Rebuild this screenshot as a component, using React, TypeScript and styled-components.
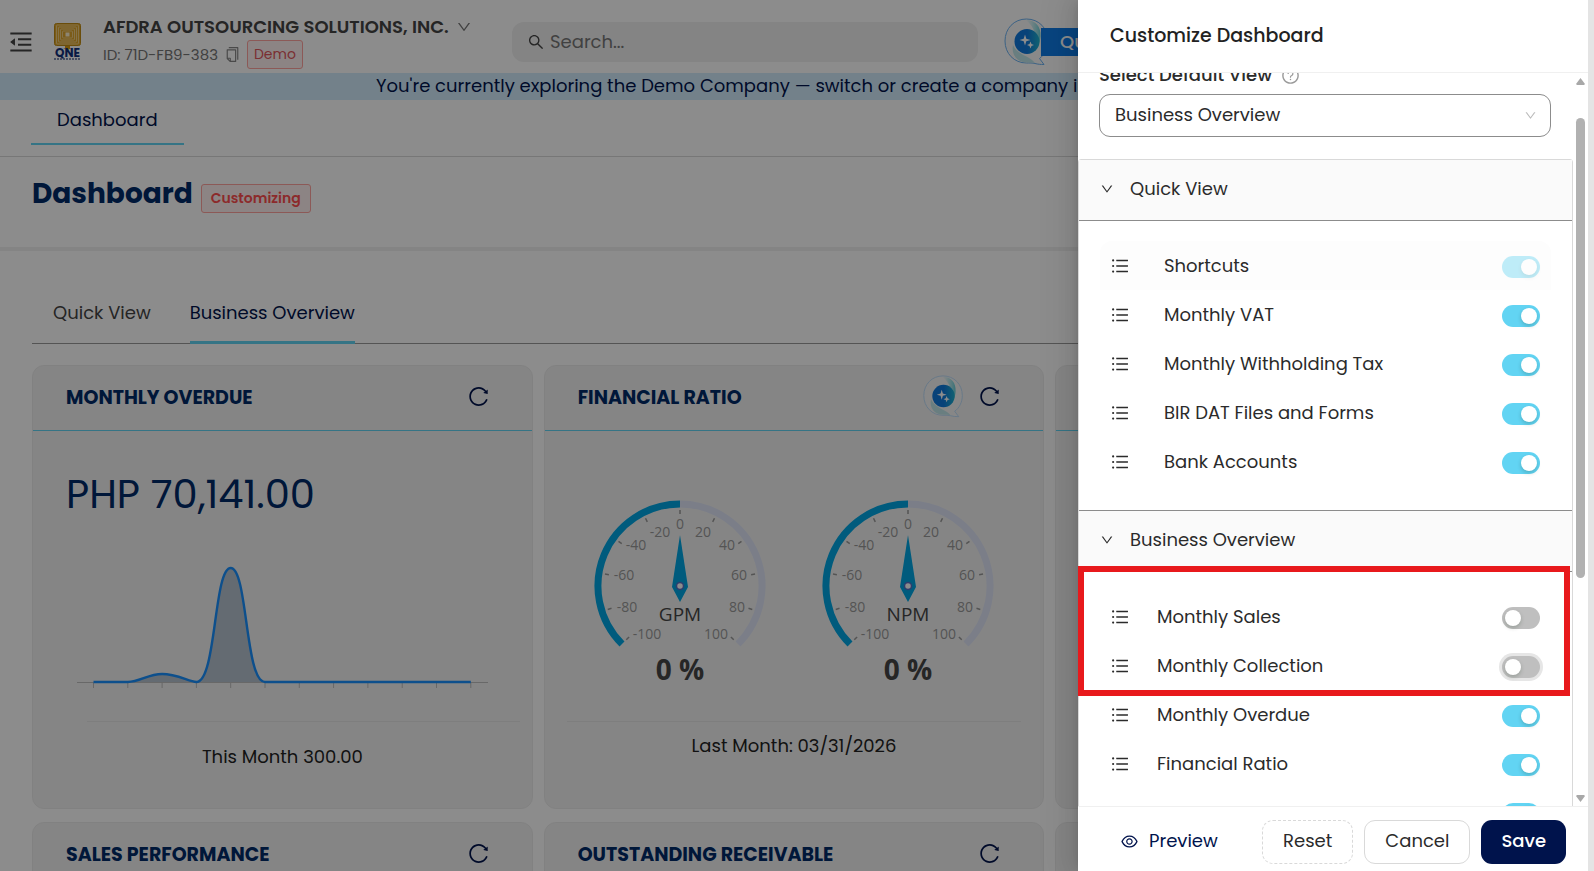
import React, { useId, useLayoutEffect, useRef, useState } from 'react';
import styled, { createGlobalStyle, css } from 'styled-components';
import {
  AiOutlineCopy,
  AiOutlineDown,
  AiOutlineEye,
  AiOutlineMenuFold,
  AiOutlineQuestionCircle,
  AiOutlineReload,
  AiOutlineSearch,
  AiOutlineUnorderedList,
} from 'react-icons/ai';

const sans = `Poppins, Inter, "Open Sans", sans-serif`;
const chartSans = `"Segoe UI", "Open Sans", sans-serif`;
const navy = '#00134c';
const heading = '#002a69';
const sky = '#62d4f3';

const GlobalStyle = createGlobalStyle`
  *, *::before, *::after { box-sizing: border-box; }
  body { margin: 0; background: #fff; font: 400 18px/28px ${sans}; color: #2b2b2b; overflow: hidden; }
  button, input, select { font: inherit; color: inherit; }
  button { border: 0; padding: 0; background: none; cursor: pointer; }
  h1, h2, p { margin: 0; }
  svg { display: block; flex: none; }
`;

/* ---------- shell ---------- */

const Frame = styled.div`
  display: flex;
  height: 100vh;
`;
const Shell = styled.div`
  position: relative;
  flex: 1;
  min-width: 0;
  overflow: hidden;
`;
const WindowGutter = styled.div`
  flex: none;
  width: 6px;
  background: #e4e4e4;
`;
const Mask = styled.div`
  position: absolute;
  inset: 0;
  background: rgba(0, 0, 0, 0.45);
`;

/* ---------- top bar ---------- */

const TopBar = styled.header`
  display: flex;
  align-items: center;
  height: 73px;
  padding: 14px 0 4px 10px;
`;
const Brand = styled.div`
  display: flex;
  align-items: center;
  gap: 22px;
  flex: 0 0 502px;
`;
const IconButton = styled.button<{ $color?: string }>`
  display: flex;
  align-items: center;
  color: ${(p) => p.$color ?? '#444'};
`;
const CompanyName = styled.button`
  display: flex;
  align-items: center;
  gap: 7px;
  font-weight: 600;
  line-height: 26px;
  color: #444;
  white-space: nowrap;
`;
const CompanyMeta = styled.div`
  display: flex;
  align-items: center;
  gap: 6px;
  font-size: 15px;
  color: #777;
`;
const Tag = styled.span<{ $strong?: boolean }>`
  border: 1px solid #ffa39e;
  border-radius: 3px;
  background: #fff1f0;
  font-size: 14px;
  line-height: 27px;
  ${(p) =>
    p.$strong
      ? css`padding: 0 9px; font-weight: 600; color: #ff4d4f;`
      : css`padding: 0 6px; color: #e0565c;`}
`;
const SearchBox = styled.label`
  display: flex;
  align-items: center;
  gap: 3px;
  flex: 0 1 466px;
  height: 40px;
  padding: 0 15px;
  border-radius: 12px;
  background: #f0f0f0;
  color: #444;
`;
const SearchInput = styled.input`
  flex: 1;
  min-width: 0;
  border: 0;
  background: none;
  outline: none;
  &::placeholder { color: #777; opacity: 1; }
`;
const Assistant = styled.button`
  display: flex;
  align-items: center;
  margin-left: 25px;
  color: #fff;
`;
const AssistantLabel = styled.span`
  height: 28px;
  margin-left: -10px;
  padding: 0 16px 0 19px;
  border-radius: 0 6px 6px 0;
  background: #0f7ce8;
  font-weight: 500;
  white-space: nowrap;
`;
const Notice = styled.p`
  height: 27px;
  line-height: 26px;
  padding-left: 376px;
  background: #d1ecfc;
  color: ${navy};
  white-space: nowrap;
  overflow: hidden;
`;

/* ---------- page ---------- */

const PageTabs = styled.nav`
  display: flex;
  align-items: flex-start;
  height: 57px;
  padding-left: 31px;
  border-bottom: 1px solid #d9d9d9;
`;
const PageTab = styled.button`
  height: 45px;
  padding: 0 26px 4px;
  border-bottom: 2px solid ${sky};
  color: ${navy};
`;
const TitleRow = styled.div`
  display: flex;
  align-items: baseline;
  gap: 8px;
  height: 94px;
  padding: 13px 0 0 32px;
  border-bottom: 4px solid #f0f0f0;
`;
const PageTitle = styled.h1`
  font-size: 28px;
  font-weight: 700;
  line-height: 48px;
  color: ${heading};
`;
const Content = styled.main`
  padding: 47px 32px 0;
`;
const ViewTabs = styled.nav`
  display: flex;
  gap: 39px;
  padding: 0 21px;
  border-bottom: 1px solid #999;
`;
const ViewTab = styled.button<{ $active?: boolean }>`
  margin-bottom: -1px;
  padding-bottom: 13px;
  line-height: 30px;
  border-bottom: 3px solid ${(p) => (p.$active ? sky : 'transparent')};
  color: ${(p) => (p.$active ? navy : '#444')};
`;
const CardGrid = styled.div`
  display: grid;
  grid-template-columns: repeat(3, 1fr);
  gap: 13px 11px;
  margin-top: 21px;
`;
const CardBox = styled.section`
  min-height: 444px;
  border: 1px solid #ececec;
  border-radius: 12px;
  background: #f3f3f3;
`;
const CardHead = styled.header`
  display: flex;
  align-items: center;
  height: 65px;
  padding: 0 42px 0 33px;
  border-bottom: 1px solid ${sky};
`;
const CardTitle = styled.h2`
  flex: 1;
  font-size: 19px;
  font-weight: 700;
  color: ${heading};
`;
const CardTools = styled.div`
  display: flex;
  align-items: center;
  gap: 13px;
  padding-bottom: 4px;
`;
const Amount = styled.p`
  padding: 33px 0 36px 33px;
  font-size: 40px;
  line-height: 60px;
  color: ${heading};
`;
const Centered = styled.div<{ $top?: number }>`
  display: flex;
  justify-content: center;
  padding-top: ${(p) => p.$top ?? 0}px;
`;
const CardFoot = styled.p<{ $loose?: boolean }>`
  margin: ${(p) => (p.$loose ? '29px 12px 0 54px' : '26px 22px 0')};
  border-top: 1px solid #e6e6e6;
`;
const CardNote = styled.p<{ $loose?: boolean }>`
  padding-top: ${(p) => (p.$loose ? 21 : 10)}px;
  text-align: center;
  color: #222;
`;

/* ---------- drawer ---------- */

const DrawerPanel = styled.aside`
  position: absolute;
  top: 0;
  right: 0;
  bottom: 0;
  display: flex;
  flex-direction: column;
  width: 510px;
  background: #fff;
  box-shadow: -6px 0 16px rgba(0, 0, 0, 0.08), -3px 0 6px -4px rgba(0, 0, 0, 0.12), -9px 0 28px 8px rgba(0, 0, 0, 0.05);
`;
const DrawerHead = styled.header`
  flex: none;
  height: 73px;
  padding: 0 32px;
  border-bottom: 1px solid #f0f0f0;
`;
const DrawerTitle = styled.h2`
  font-size: 19px;
  font-weight: 500;
  line-height: 72px;
  color: #222;
`;
const DrawerBody = styled.div`
  display: flex;
  flex: 1;
  min-height: 0;
`;
const Scroller = styled.div`
  flex: 1;
  min-width: 0;
  overflow: hidden;
`;
const ScrollRail = styled.div`
  display: flex;
  flex-direction: column;
  justify-content: space-between;
  align-items: center;
  width: 15px;
  padding: 5px 0 4px;
`;
const RailTrack = styled.div`
  flex: 1;
  padding-top: 33px;
`;
const RailThumb = styled.div`
  width: 9px;
  height: 68%;
  border-radius: 5px;
  background: #b1b1b1;
`;
const FieldLabel = styled.div`
  display: flex;
  align-items: center;
  gap: 9px;
  padding: 24px 21px 7px;
  line-height: 24px;
  font-weight: 500;
`;
const HelpIcon = styled(AiOutlineQuestionCircle)`
  color: #999;
`;
const SelectWrap = styled.div`
  position: relative;
  margin: 0 22px 22px 21px;
`;
const SelectBox = styled.select`
  display: block;
  width: 100%;
  height: 43px;
  padding: 0 40px 2px 15px;
  border: 1px solid #8c8c8c;
  border-radius: 11px;
  background: #fff;
  appearance: none;
`;
const SelectArrow = styled(AiOutlineDown)`
  position: absolute;
  top: 15px;
  right: 14px;
  color: #bbb;
  pointer-events: none;
`;
const Collapse = styled.div`
  border: 1px solid #d9d9d9;
  border-radius: 3px;
`;
const Group = styled.section`
  & + & { border-top: 1px solid #8c8c8c; }
`;
const GroupHead = styled.button`
  display: flex;
  align-items: center;
  gap: 16px;
  width: 100%;
  height: 61px;
  padding: 0 21px 2px;
  border-bottom: 1px solid #8c8c8c;
  background: #fafafa;
  text-align: left;
`;
const GroupBody = styled.div`
  padding: 20px 21px 24px;
`;
const Row = styled.div<{ $muted?: boolean; $gap: number }>`
  display: flex;
  align-items: center;
  gap: ${(p) => p.$gap}px;
  height: 49px;
  padding: 0 11px 0 10px;
  border-radius: 12px 12px 0 0;
  background: ${(p) => (p.$muted ? '#fdfdfd' : 'transparent')};
`;
const RowLabel = styled.label`
  flex: 1;
`;
const Toggle = styled.input<{ $halo?: boolean }>`
  appearance: none;
  flex: none;
  width: 38px;
  height: 22px;
  margin: 2px 0 0;
  padding: 3px;
  border-radius: 11px;
  background: #bfbfbf;
  box-shadow: ${(p) => (p.$halo ? '0 0 0 3px #e6e6e6' : 'none')};
  &::before {
    content: '';
    display: block;
    width: 16px;
    height: 16px;
    border-radius: 50%;
    background: #fff;
    box-shadow: 0 2px 4px rgba(0, 35, 11, 0.2);
  }
  &:checked { background: ${sky}; }
  &:checked::before { margin-left: 16px; }
  &:disabled { opacity: 0.4; }
`;
const Marked = styled.div`
  position: relative;
`;
const MarkBox = styled.div`
  position: absolute;
  inset: -26px -19px -6px -22px;
  border: 6px solid #e8191c;
  pointer-events: none;
`;
const DrawerFoot = styled.footer`
  display: flex;
  align-items: center;
  gap: 11px;
  flex: none;
  padding: 13px 22px 7px 42px;
  border-top: 1px solid #f0f0f0;
`;
const FootButton = styled.button<{ $kind: 'link' | 'dashed' | 'plain' | 'primary' }>`
  display: flex;
  align-items: center;
  height: 44px;
  padding: 0 20px 2px;
  border-radius: 11px;
  ${(p) =>
    p.$kind === 'link'
      ? css`gap: 10px; margin-right: auto; padding: 0 0 2px; color: ${navy};`
      : p.$kind === 'primary'
        ? css`background: ${navy}; color: #fff; font-weight: 500;`
        : css`border: 1px ${p.$kind === 'dashed' ? 'dashed' : 'solid'} #d9d9d9; background: #fff;`}
`;

/* ---------- drawings ---------- */

const Logo = () => (
  <svg width="27" height="37" viewBox="0 0 27 37" role="img" aria-label="QNE Software">
    <rect x="0.5" y="0.5" width="26" height="22" rx="2" fill="#e0a62c" stroke="#c28c14" />
    {[2.5, 4.5, 6.5, 8.5].map((d) => (
      <rect key={d} x={d} y={d - 0.5} width={27 - 2 * d} height={24 - 2 * d} rx="1" fill="none" stroke="#f7e3ae" strokeWidth="0.7" />
    ))}
    <rect x="11.5" y="9.5" width="4" height="4" fill="#fff3d2" />
    <path d="M11 23h5v2h2l-4.5 2L9 25h2z" fill="#d89a10" />
    <text x="13.5" y="34" textAnchor="middle" fontFamily={sans} fontSize="12" fontWeight="700" fill="#12307c">QNE</text>
    <path d="M0 36h27" stroke="#5b6c9a" strokeWidth="1.5" strokeDasharray="2 1" />
  </svg>
);

const Spark = ({ size, faint }: { size: number; faint?: boolean }) => {
  const id = useId();
  return (
    <svg width={size} height={size} viewBox="0 0 46 48">
      <defs>
        <linearGradient id={id + 'a'} x1="0" y1="0" x2="1" y2="0">
          <stop offset="0.5" stopColor="#0f78dc" />
          <stop offset="1" stopColor="#1fb2cf" />
        </linearGradient>
        <linearGradient id={id + 'b'} x1="0" y1="0" x2="1" y2="0">
          <stop offset="0" stopColor="#cdeef2" stopOpacity="0.2" />
          <stop offset="1" stopColor="#63cfd8" />
        </linearGradient>
      </defs>
      <path
        d="M22.5 1C10 1 1 10.500 1 23s9 22 21.500 22c3 0 6-.2 8.500.5 3 .8 5.500 1 9 1l-4.500-6C41 36.500 44 30 44 23 44 10.500 35 1 22.500 1z"
        fill={faint ? '#f6f6f6' : '#fafafa'}
        stroke={faint ? '#b7d9f7' : '#6cb2f2'}
      />
      <path d="M22 2c10 0 15 7 14.500 16-.3 6-2 9-4 12 1-12-3-22-10.500-28z" fill={`url(#${id}b)`} />
      <path d="M9 27c-2 10 4 17 14 17.500 3 .2 6 0 8 .8C27 38 14 38 9 27z" fill="#bfe6ea" />
      <circle cx="23" cy="23.5" r="12.5" fill={`url(#${id}a)`} />
      <path d="M21 16.500l1.300 4.200 4.200 1.300-4.200 1.300L21 27.500l-1.300-4.200-4.200-1.300 4.200-1.300zM26.500 23.500l1 2.500 2.500 1-2.500 1-1 2.500-1-2.500-2.500-1 2.500-1z" fill="#fff" />
    </svg>
  );
};

const OverdueChart = () => {
  const step = 34.3;
  const x0 = 17.5;
  const base = 122;
  const x = (i: number) => x0 + i * step;
  const bumpCurve = `C${x(1) + 12} ${base} ${x(2) - 14} ${base - 8} ${x(2)} ${base - 8}S${x(3) - 8} ${base - 1} ${x(3)} ${base}`;
  const peakCurve = `C${x(3) + 20} ${base} ${x(4) - 17} ${base - 114} ${x(4)} ${base - 114}S${x(5) - 20} ${base} ${x(5)} ${base}`;
  return (
    <svg width="412" height="132" viewBox="0 0 412 132">
      <path d={`M${x(1)} ${base}${bumpCurve}${peakCurve}Z`} fill="#b7c3cf" />
      <path d={`M1 ${base + 0.5}H412`} stroke="#bdbdbd" />
      {Array.from({ length: 12 }, (_, i) => (
        <path key={i} d={`M${x(i)} ${base}v6`} stroke="#bdbdbd" />
      ))}
      <path d={`M${x0} ${base}H${x(1)}${bumpCurve}${peakCurve}H${x(11)}`} fill="none" stroke="#1890ff" strokeWidth="2.4" strokeLinejoin="round" />
    </svg>
  );
};

const gaugeLabels: [string, number, number][] = [
  ['-100', -33, 48], ['-80', -53, 21], ['-60', -56, -11], ['-40', -44, -41], ['-20', -20, -54], ['0', 0, -62],
  ['20', 23, -54], ['40', 47, -41], ['60', 59, -11], ['80', 57, 21], ['100', 36, 48],
];

const Gauge = ({ name }: { name: string }) => (
  <svg width="228" height="200" viewBox="-114 -91 228 200" fontFamily={chartSans} textAnchor="middle">
    <path d="M0-82A82 82 0 0 1 58 58" fill="none" stroke="#e0e6f8" strokeWidth="7" />
    <path d="M-58 58A82 82 0 0 1 0-82" fill="none" stroke="#00a7e3" strokeWidth="7" />
    {gaugeLabels.map(([text, lx, ly], i) => {
      const a = ((i * 27 - 135) * Math.PI) / 180;
      return (
        <g key={text}>
          <line x1={Math.sin(a) * 72} y1={-Math.cos(a) * 72} x2={Math.sin(a) * 76} y2={-Math.cos(a) * 76} stroke="#999" strokeWidth="1.5" />
          <text x={lx} y={ly + 5} fontSize="14" fill="#999">{text}</text>
        </g>
      );
    })}
    <path d="M0-51L8 1 0 16-8 1z" fill="#00a7e3" />
    <circle r="3.5" fill="#fff" stroke="#5470c6" strokeWidth="1.5" />
    <text y="35" fontSize="19" fill="#464646">{name}</text>
    <text y="94" fontSize="28" fontWeight="700" fill="#464646">0 %</text>
  </svg>
);

const RailArrow = ({ down }: { down?: boolean }) => (
  <svg width="9" height="7" viewBox="0 0 9 7">
    <path d={down ? 'M1 0h7l1 1-4.5 6L0 1z' : 'M4.5 0L9 6 8 7H1L0 6z'} fill="#a8a8a8" />
  </svg>
);

/* ---------- composition ---------- */

const Card = ({ title, spark, children }: { title: string; spark?: boolean; children?: React.ReactNode }) => (
  <CardBox>
    <CardHead>
      <CardTitle>{title}</CardTitle>
      <CardTools>
        {spark && (
          <IconButton aria-label={`Ask about ${title}`}>
            <Spark size={43} faint />
          </IconButton>
        )}
        <IconButton $color={navy} aria-label={`Refresh ${title}`}>
          <AiOutlineReload size={23} />
        </IconButton>
      </CardTools>
    </CardHead>
    {children}
  </CardBox>
);

type Item = { name: string; on: boolean; locked?: boolean; halo?: boolean };

const ToggleRow = ({ item, gap }: { item: Item; gap: number }) => {
  const id = useId();
  const [on, setOn] = useState(item.on);
  return (
    <Row $muted={item.locked} $gap={gap}>
      <AiOutlineUnorderedList size={20} />
      <RowLabel htmlFor={id}>{item.name}</RowLabel>
      <Toggle id={id} type="checkbox" role="switch" checked={on} disabled={item.locked} $halo={item.halo} onChange={() => setOn(!on)} />
    </Row>
  );
};

const quickView: Item[] = [
  { name: 'Shortcuts', on: true, locked: true },
  { name: 'Monthly VAT', on: true },
  { name: 'Monthly Withholding Tax', on: true },
  { name: 'BIR DAT Files and Forms', on: true },
  { name: 'Bank Accounts', on: true },
];
const hiddenOverview: Item[] = [
  { name: 'Monthly Sales', on: false },
  { name: 'Monthly Collection', on: false, halo: true },
];
const shownOverview: Item[] = [
  { name: 'Monthly Overdue', on: true },
  { name: 'Financial Ratio', on: true },
  { name: 'Sales Performance', on: true },
];

const Drawer = () => {
  const scroller = useRef<HTMLDivElement>(null);
  useLayoutEffect(() => {
    if (scroller.current) scroller.current.scrollTop = 34;
  }, []);
  return (
    <DrawerPanel role="dialog" aria-label="Customize Dashboard">
      <DrawerHead>
        <DrawerTitle>Customize Dashboard</DrawerTitle>
      </DrawerHead>
      <DrawerBody>
        <Scroller ref={scroller}>
          <FieldLabel>
            <label htmlFor="default-view">Select Default View</label>
            <HelpIcon size={19} />
          </FieldLabel>
          <SelectWrap>
            <SelectBox id="default-view" defaultValue="Business Overview">
              <option>Quick View</option>
              <option>Business Overview</option>
            </SelectBox>
            <SelectArrow size={13} />
          </SelectWrap>
          <Collapse>
            <Group>
              <GroupHead>
                <AiOutlineDown size={14} />
                Quick View
              </GroupHead>
              <GroupBody>
                {quickView.map((item) => <ToggleRow key={item.name} item={item} gap={34} />)}
              </GroupBody>
            </Group>
            <Group>
              <GroupHead>
                <AiOutlineDown size={14} />
                Business Overview
              </GroupHead>
              <GroupBody>
                <Marked>
                  {hiddenOverview.map((item) => <ToggleRow key={item.name} item={item} gap={27} />)}
                  <MarkBox />
                </Marked>
                {shownOverview.map((item) => <ToggleRow key={item.name} item={item} gap={27} />)}
              </GroupBody>
            </Group>
          </Collapse>
        </Scroller>
        <ScrollRail aria-hidden="true">
          <RailArrow />
          <RailTrack>
            <RailThumb />
          </RailTrack>
          <RailArrow down />
        </ScrollRail>
      </DrawerBody>
      <DrawerFoot>
        <FootButton $kind="link">
          <AiOutlineEye size={19} />
          Preview
        </FootButton>
        <FootButton $kind="dashed">Reset</FootButton>
        <FootButton $kind="plain">Cancel</FootButton>
        <FootButton $kind="primary">Save</FootButton>
      </DrawerFoot>
    </DrawerPanel>
  );
};

export default function App() {
  return (
    <Frame>
      <GlobalStyle />
      <Shell>
        <TopBar>
          <Brand>
            <IconButton aria-label="Collapse menu">
              <AiOutlineMenuFold size={22} viewBox="100 100 824 824" />
            </IconButton>
            <Logo />
            <div>
              <CompanyName>
                AFDRA OUTSOURCING SOLUTIONS, INC.
                <AiOutlineDown size={16} color="#777" />
              </CompanyName>
              <CompanyMeta>
                ID: 71D-FB9-383
                <IconButton $color="#888" aria-label="Copy ID">
                  <AiOutlineCopy size={17} />
                </IconButton>
                <Tag>Demo</Tag>
              </CompanyMeta>
            </div>
          </Brand>
          <SearchBox>
            <AiOutlineSearch size={18} />
            <SearchInput aria-label="Search" placeholder="Search..." />
          </SearchBox>
          <Assistant>
            <Spark size={48} />
            <AssistantLabel>Quick Assist</AssistantLabel>
          </Assistant>
        </TopBar>
        <Notice>You're currently exploring the Demo Company — switch or create a company in My Companies</Notice>
        <PageTabs>
          <PageTab>Dashboard</PageTab>
        </PageTabs>
        <TitleRow>
          <PageTitle>Dashboard</PageTitle>
          <Tag $strong>Customizing</Tag>
        </TitleRow>
        <Content>
          <ViewTabs>
            <ViewTab>Quick View</ViewTab>
            <ViewTab $active>Business Overview</ViewTab>
          </ViewTabs>
          <CardGrid>
            <Card title="MONTHLY OVERDUE">
              <Amount>PHP 70,141.00</Amount>
              <Centered>
                <OverdueChart />
              </Centered>
              <CardFoot $loose />
              <CardNote $loose>This Month 300.00</CardNote>
            </Card>
            <Card title="FINANCIAL RATIO" spark>
              <Centered $top={64}>
                <Gauge name="GPM" />
                <Gauge name="NPM" />
              </Centered>
              <CardFoot />
              <CardNote>Last Month: 03/31/2026</CardNote>
            </Card>
            <Card title="" />
            <Card title="SALES PERFORMANCE" />
            <Card title="OUTSTANDING RECEIVABLE" />
            <Card title="" />
          </CardGrid>
        </Content>
        <Mask />
        <Drawer />
      </Shell>
      <WindowGutter />
    </Frame>
  );
}
